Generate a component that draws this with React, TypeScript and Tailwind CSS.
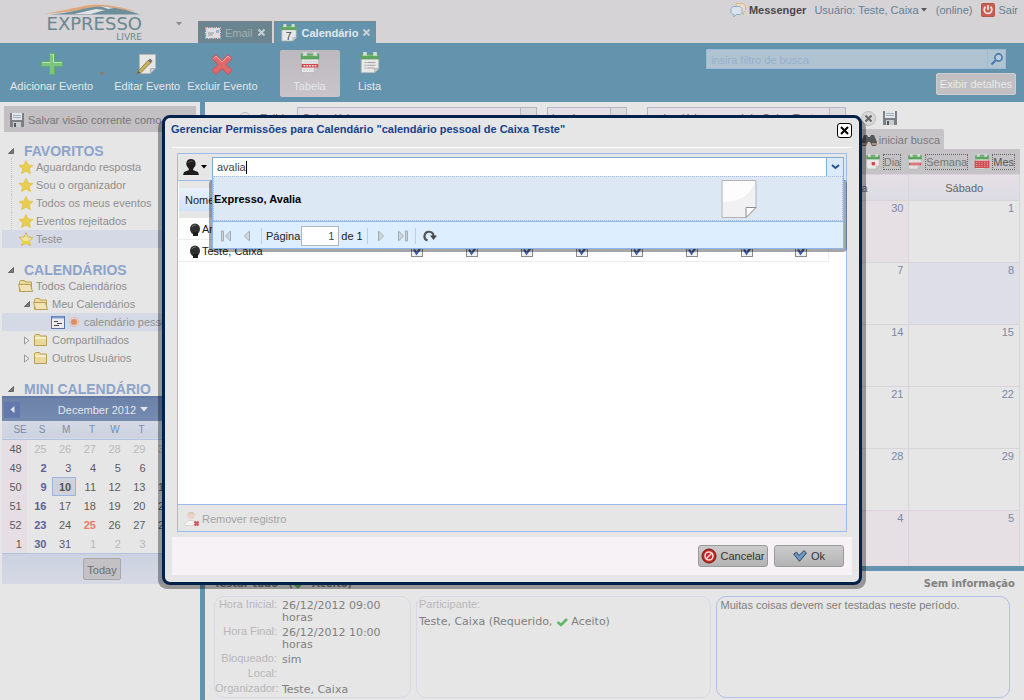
import React from "react";

type KidsProps = { children?: React.ReactNode };

/* ---------- icons ---------- */

const PlusIcon = () => (
  <svg width="24" height="24" viewBox="0 0 24 24">
    <path d="M9.500 1.500h5v8h8v5h-8v8h-5v-8h-8v-5h8z" fill="#7cc47f" stroke="#5fae68" />
    <path d="M10.500 2.500h3v8h8M2.500 10.500h8" fill="none" stroke="#b4e2b0" />
  </svg>
);

const EditIcon = () => (
  <svg width="24" height="24" viewBox="0 0 24 24">
    <path d="M4.500 2.500h16v14l-5 5h-11z" fill="#e6e6e4" stroke="#b3b9bb" />
    <path d="M15.500 21.500v-5h5z" fill="#cfcfcd" stroke="#aab" />
    <path d="M3 19.500L13.500 8l2.500 2.500L5.500 21 2.500 21.500z" fill="#cdb45c" stroke="#8d7d4c" />
    <path d="M2.500 21.500l1-2.500 1.800 1.800z" fill="#555" />
    <path d="M13 8.500l2-2 2.500 2.500-2 2z" fill="#77746e" />
  </svg>
);

const DeleteIcon = () => (
  <svg width="24" height="24" viewBox="0 0 24 24">
    <path d="M6 2.500l6 6 6-6 4 4-6 6 6 6-4 4-6-6-6 6-4-4 6-6-6-6z" fill="#e0696b" stroke="#c95355" />
    <path d="M3.500 6.500l2.500-2.500 6 6 6-6 2.500 2.500" fill="none" stroke="#eeb3b1" />
  </svg>
);

const CalIcon = ({ size = 24, kind }: { size?: number; kind: string }) => (
  <svg width={size} height={size} viewBox="0 0 24 24" className="shrink-0">
    <path d="M2.500 3.500h19v14.500l-4.500 4.500h-14.500z" fill="#e8e8e8" stroke="#b3b6b5" />
    <path d="M17 22.500V18h4.500z" fill="#d2d2d2" stroke="#b3b6b5" />
    <path d="M2.500 2.500h19v5h-19z" fill="#5fa862" stroke="#4f9a55" />
    <path d="M3 3.500h18" stroke="#8cc58c" />
    <path d="M6.500 0v4M17.500 0v4" stroke="#d5dcd6" strokeWidth="4" />
    {kind === "list" && <path d="M6 11.500h2M9 11.500h9M6 14.500h2M9 14.500h9M6 17.500h2M9 17.500h8" stroke="#9b9b9b" />}
    {kind === "week" && <path d="M5 10.500h15M5 19.500h11" stroke="#bbb" strokeDasharray="1 1" />}
    {kind === "week" && <rect x="3" y="13" width="18" height="4" fill="#d04a50" />}
    {kind === "week" && <path d="M5 15h15" stroke="#f0d6d6" strokeWidth="1.500" strokeDasharray="2 1" />}
    {kind === "month" && <rect x="1" y="10" width="22" height="11" fill="#d04a50" />}
    {kind === "month" && <path d="M3 12.500h19M3 15.500h19M3 18.500h19" stroke="#efcfd0" strokeDasharray="2 2" />}
    {kind === "day" && <rect x="10" y="12" width="5" height="5" fill="#d04a50" />}
    {kind === "seven" && (
      <text x="7.500" y="21" fontSize="14" fontWeight="400" fontFamily="Liberation Sans, sans-serif" fill="#3f4448">
        7
      </text>
    )}
  </svg>
);

const MailIcon = () => (
  <svg width="16" height="12" viewBox="0 0 16 12" className="shrink-0">
    <rect x="1" y="1" width="14" height="10" fill="#dfdfe2" stroke="#d5d5da" strokeWidth="2" />
    <rect x=".5" y=".5" width="15" height="11" fill="none" stroke="#c77" strokeDasharray="1.500 3" />
    <rect x=".5" y=".5" width="15" height="11" fill="none" stroke="#68a" strokeDasharray="1.500 3" strokeDashoffset="2" />
    <path d="M3 6h6M3 8h5" stroke="#999" />
    <rect x="11" y="3" width="3" height="3" fill="#9db2d2" />
  </svg>
);

const FloppyIcon = () => (
  <svg width="14" height="14" viewBox="0 0 14 14" className="shrink-0">
    <path d="M0 0h14v14H0z" fill="#7c7f83" />
    <rect x="2" y="0" width="10" height="7" fill="#e3e6e8" />
    <path d="M3 2.500h8M3 4.500h8" stroke="#9db0c0" />
    <rect x="3" y="9" width="8" height="5" fill="#c9cbcd" />
    <rect x="4" y="10" width="2" height="4" fill="#55585c" />
  </svg>
);

const StarIcon = ({ open = false }: { open?: boolean }) => (
  <svg width="16" height="16" viewBox="0 0 16 16" className="shrink-0">
    <path
      d="M8 1.500l2 4.500 5 .500-3.800 3.200 1.200 4.800L8 12l-4.400 2.500 1.200-4.800L1 6.500 6 6z"
      fill={open ? "#efe2a0" : "#e8cd52"}
      stroke={open ? "#d5b85c" : "#e3c64f"}
    />
    {open && <path d="M4 10h8l.500 4L8 12l-4 2z" fill="#ead23f" />}
  </svg>
);

const FolderIcon = ({ open = false }: { open?: boolean }) => (
  <svg width="16" height="14" viewBox="0 0 16 14" className="shrink-0">
    <path d="M1.500 12.500v-10l1-1h4l1 1.500h6v9.500z" fill="#ead99a" stroke="#b99f55" />
    {open ? (
      <path d="M.500 5.500h12l2 7h-12z" fill="#f0e4b4" stroke="#b99f55" />
    ) : (
      <path d="M2 5h11" stroke="#f6efcb" strokeWidth="2" />
    )}
  </svg>
);

const EventListIcon = () => (
  <svg width="14" height="13" viewBox="0 0 14 13" className="shrink-0">
    <rect x=".5" y=".5" width="13" height="12" fill="#ececf0" stroke="#5c73a5" />
    <path d="M1 1.500h12" stroke="#7f9fd5" strokeWidth="2" />
    <path d="M3 5.500h4M6 7.500h5M3 9.500h5" stroke="#444" />
  </svg>
);

const Collapse = () => (
  <svg width="6" height="6" viewBox="0 0 6 6" className="shrink-0">
    <path d="M5.500.500v5h-5z" fill="#777" stroke="#666" />
  </svg>
);

const Expand = () => (
  <svg width="6" height="9" viewBox="0 0 6 9" className="shrink-0">
    <path d="M.500 1l4.500 3.500L.500 8z" fill="#eee" stroke="#999" />
  </svg>
);

const Caret = ({ className = "" }: { className?: string }) => (
  <svg width="6" height="4" viewBox="0 0 6 4" className={"shrink-0 fill-current " + className}>
    <path d="M0 0h6L3 3.500z" />
  </svg>
);

const Cross = () => (
  <svg width="7" height="7" viewBox="0 0 7 7" className="shrink-0">
    <path d="M.500.500l6 6M6.500.500l-6 6" stroke="#c9d0d3" strokeWidth="2" />
  </svg>
);

const Chevron = () => (
  <svg width="9" height="6" viewBox="0 0 9 6">
    <path d="M1 1l3.500 3L8 1" fill="none" stroke="#2b4f94" strokeWidth="2" />
  </svg>
);

const GreenCheck = () => (
  <svg width="12" height="10" viewBox="0 0 12 10" className="inline-block">
    <path d="M1.500 5l3.500 3 6-6" fill="none" stroke="#5fb865" strokeWidth="2.500" />
  </svg>
);

const HeadIcon = () => (
  <svg width="12" height="14" viewBox="0 0 12 14" className="shrink-0">
    <ellipse cx="6" cy="7" rx="5" ry="5.500" fill="#2f2f2f" />
    <path d="M4 10h5v4H4z" fill="#1d1d1d" />
    <path d="M3 5c1-2 3-2 4-2" stroke="#777" fill="none" />
  </svg>
);

const UserIcon = () => (
  <svg width="16" height="16" viewBox="0 0 16 16">
    <path d="M8 0C4 0 3 3 3.500 6.500 4 8 6 9 6 11L1 13 0 16h16l-1-3-5-2C10 9 12 8 12.500 6.500 13 3 12 0 8 0z" fill="#1c1c1c" />
    <path d="M5.500 4c1-2 3-2 4-1.500" stroke="#666" fill="none" />
  </svg>
);

const RemoveUserIcon = () => (
  <svg width="16" height="16" viewBox="0 0 16 16">
    <path d="M1 14.500c0-4 3-5 6-5s6 1 6 5z" fill="#f6f4f4" stroke="#dcd7d8" />
    <circle cx="7" cy="4.500" r="3.500" fill="#ead2c4" />
    <path d="M3.500 4c0-4.500 7-4.500 7 0-2-2-5-2-7 0z" fill="#d5c6b4" />
    <path d="M10.500 10.500l4 4M14.500 10.500l-4 4" stroke="#cf5a5a" strokeWidth="2.400" />
  </svg>
);

const NoteIcon = () => (
  <svg width="36" height="38" viewBox="0 0 36 38">
    <path d="M1 .500h34v27l-10 10H1z" fill="#f1f0f2" stroke="#b5b3b8" />
    <path d="M2 1h32c-3 13-15 21-32 21z" fill="#fdfdfd" />
    <path d="M25 37.500v-10h10z" fill="#fff" stroke="#8d8d90" />
  </svg>
);

const PagerIcon = ({ d }: { d: string }) => (
  <svg width="12" height="12" viewBox="0 0 12 12">
    <path d={d} fill="#cfd5dc" stroke="#a3abb4" />
  </svg>
);

const RefreshIcon = () => (
  <svg width="14" height="12" viewBox="0 0 14 12">
    <path d="M4.500 10.500A4.500 4.500 0 1 1 10.500 6" fill="none" stroke="#555" strokeWidth="2.200" />
    <path d="M7 5.500h7L10.500 10z" fill="#444" />
  </svg>
);

const BanIcon = () => (
  <svg width="16" height="16" viewBox="0 0 16 16">
    <circle cx="8" cy="8" r="7" fill="#c5261f" stroke="#7d1713" />
    <circle cx="8" cy="8" r="4" fill="none" stroke="#f0dcda" strokeWidth="1.600" />
    <path d="M5 11l6-6" stroke="#f0dcda" strokeWidth="1.600" />
  </svg>
);

const OkIcon = () => (
  <svg width="14" height="12" viewBox="0 0 14 12">
    <path d="M.700 4l3-1.800 2.300 3.300L11 .700 13.500 3 6.500 11.300z" fill="#6f98c4" stroke="#2c4664" />
  </svg>
);

const ChatIcon = () => (
  <svg width="16" height="16" viewBox="0 0 16 16">
    <path d="M6 1.500h7l2.500 2v5l-2 2v2l-2-2H7z" fill="#e8dccb" stroke="#d9b887" />
    <path d="M3 4.500h7l2 2v4l-2 2H6.500L4 15v-2.500H3l-2-2v-4z" fill="#dbe3ec" stroke="#8cabc8" />
  </svg>
);

const PowerIcon = () => (
  <svg width="14" height="14" viewBox="0 0 14 14">
    <rect x=".5" y=".5" width="13" height="13" rx="1" fill="#cb5e51" stroke="#b5564b" />
    <path d="M4.500 3.800a3.800 3.800 0 1 0 5 0M7 2v5" fill="none" stroke="#f0dedb" strokeWidth="1.800" />
  </svg>
);

const SearchIcon = () => (
  <svg width="14" height="14" viewBox="0 0 14 14">
    <circle cx="8.500" cy="5.500" r="3.600" fill="#b9cde0" stroke="#4679a8" strokeWidth="1.600" />
    <path d="M5.500 8.500L1.500 12.500" stroke="#4679a8" strokeWidth="2.200" />
  </svg>
);

const BinocularsIcon = () => (
  <svg width="16" height="14" viewBox="0 0 16 14">
    <path d="M3 2h3l1 2h2l1-2h3l3 7-1 4h-4L9 9H7l-2 4H1L0 9z" fill="#55575b" />
    <path d="M1 10h4v2H1zM11 10h4v2h-4z" fill="#b98e6d" />
  </svg>
);

const Logo = () => (
  <div className="flex w-[122px] flex-col items-end text-[#6a8791]">
    <svg width="98" height="11" viewBox="0 0 98 11">
      <path d="M0 9.500C22 7 38 1 52 .500c16 0 30 4 40 7-12-2-24-3.500-36-3C40 5 22 9 0 9.500z" fill="#dfa679" />
      <path d="M6 10.500C28 9 42 3 56 2.500c14 .500 30 4 40 8z" fill="#6d8f9c" />
      <path d="M30 10l22-5 9 1-14 4zM56 2l14 2-6 1z" fill="#dfe4e7" />
    </svg>
    <span className="font-['DejaVu_Sans',sans-serif] text-[18px] leading-[18px]">EXPRESSO</span>
    <span className="font-['DejaVu_Sans',sans-serif] text-[9px] leading-[9px]">LIVRE</span>
  </div>
);

/* ---------- header and tool bar ---------- */

const Header = () => (
  <header className="flex h-[43px] justify-between bg-[#d5d3d6]">
    <div className="flex items-end">
      <a href="#inicio" aria-label="Expresso Livre" className="mb-px ml-[20px]">
        <Logo />
      </a>
      <Caret className="mr-4 mb-[17px] ml-[34px] text-[#8b8b8b]" />
      <nav className="flex items-end gap-[2px]">
        <a href="#email" className="flex h-[22px] items-center gap-1 border border-b-0 border-[#7c8284] bg-[#6b8590] px-1.5 text-[#a3b0b4]">
          <MailIcon />
          <span className="pr-px">Email</span>
          <Cross />
        </a>
        <a href="#calendario" className="flex h-[22px] items-center gap-1 border border-b-0 border-[#7c8a8c] bg-[#6393ad] px-[5px] font-bold text-[#e4e9ec]">
          <CalIcon size={18} kind="seven" />
          <span className="pr-px">Calendário</span>
          <Cross />
        </a>
      </nav>
    </div>
    <div className="flex h-5 items-center pr-1.5 text-[#5f8296]">
      <ChatIcon />
      <a href="#messenger" className="mr-2 ml-[3px] font-bold text-[#484848]">
        Messenger
      </a>
      <a href="#usuario" className="flex items-center gap-0.5">
        Usuário: Teste, Caixa
        <Caret className="text-[#555]" />
      </a>
      <span className="mx-[9px]">(online)</span>
      <PowerIcon />
      <a href="#sair" className="ml-[3px]">
        Sair
      </a>
    </div>
  </header>
);

const ToolButton = ({ label, children, className = "" }: KidsProps & { label: string; className?: string }) => (
  <button className={"flex h-[47px] flex-col items-center rounded-[2px] pt-0.5 leading-[16px] " + className}>
    {children}
    <span className="pt-0.5">{label}</span>
  </button>
);

const ToolBar = () => (
  <div className="flex h-[59px] justify-between bg-[#6393ad] text-[#e4e8ea]">
    <div className="flex pt-[7px] pl-[10px]">
      <ToolButton label="Adicionar Evento">
        <PlusIcon />
      </ToolButton>
      <Caret className="mt-[22px] mr-[9px] ml-1.5 text-[#877f70]" />
      <ToolButton label="Editar Evento">
        <EditIcon />
      </ToolButton>
      <ToolButton label="Excluir Evento" className="ml-[7px]">
        <DeleteIcon />
      </ToolButton>
      <ToolButton label="Tabela" className="ml-[22px] w-[60px] bg-linear-to-b from-[#bcb9be] to-[#c9c4ca]">
        <CalIcon size={22} kind="week" />
        <span className="h-0.5" />
      </ToolButton>
      <ToolButton label="Lista" className="w-[60px]">
        <CalIcon size={22} kind="list" />
        <span className="h-0.5" />
      </ToolButton>
    </div>
    <div className="flex flex-col items-end gap-1 pt-1.5 pr-2">
      <div className="mr-2.5 flex h-5 w-[300px] border border-[#9bb9d8] bg-[#b0c3d1]">
        <input
          aria-label="Filtro de busca"
          placeholder="insira filtro de busca"
          className="min-w-0 grow bg-transparent px-1 pt-0.5 outline-none placeholder:text-[#96b0cc]"
        />
        <button aria-label="Buscar" className="flex w-[18px] items-center justify-center border-l border-[#9bb9d8]">
          <SearchIcon />
        </button>
      </div>
      <button className="h-[22px] rounded-[2px] border border-[#cfccd0] bg-[#c1bfc2] px-[3px] text-[#e9e9ea]">Exibir detalhes</button>
    </div>
  </div>
);

/* ---------- side bar ---------- */

const SectionTitle = ({ children }: KidsProps) => (
  <h2 className="flex h-4 items-center gap-2.5 pt-0.5 pl-[8px] text-[14px] leading-[16px] font-bold text-[#8ca3cb]">
    <Collapse />
    {children}
  </h2>
);

const TreeRow = ({ children, className = "" }: KidsProps & { className?: string }) => (
  <li className={"flex h-[18px] items-center gap-0.5 whitespace-nowrap " + className}>{children}</li>
);

const TreeLine = () => <span className="-mr-0.5 h-full w-[7px] border-l border-dotted border-[#c4c4c4]" />;

const favorites = ["Aguardando resposta", "Sou o organizador", "Todos os meus eventos", "Eventos rejeitados"];

const weeks: [number, number[]][] = [
  [48, [25, 26, 27, 28, 29, 30, 1]],
  [49, [2, 3, 4, 5, 6, 7, 8]],
  [50, [9, 10, 11, 12, 13, 14, 15]],
  [51, [16, 17, 18, 19, 20, 21, 22]],
  [52, [23, 24, 25, 26, 27, 28, 29]],
  [1, [30, 31, 1, 2, 3, 4, 5]],
];

const isOtherMonth = (w: number, d: number) => (w === 48 && d > 20) || (w === 1 && d < 20);

const dayClass = (w: number, d: number, i: number) => {
  if (isOtherMonth(w, d)) return "text-[#b9b9b9]";
  if (w === 52 && d === 25) return "font-bold text-[#ee7b66]";
  if (w === 50 && d === 10) return "bg-[#cfd2da] font-bold text-[#555] shadow-[inset_0_0_0_1px_#9fb4dc]";
  if (i === 0) return "font-bold text-[#60609b]";
  return "text-[#5c5c5c]";
};

const MiniCalendar = () => (
  <div className="ml-0.5">
    <div className="flex h-[25px] items-center border-t-2 border-[#6278a5] bg-linear-to-b from-[#6c82a9] to-[#768bb0] text-[#e4e6ea]">
      <button aria-label="Mês anterior" className="ml-0.5 flex h-4 w-4 items-center justify-center bg-[#6379ab]">
        <svg width="5" height="7" viewBox="0 0 5 7" className="fill-current">
          <path d="M4.500 0v7L.500 3.500z" />
        </svg>
      </button>
      <button className="flex grow items-center justify-center gap-1 pr-[14px]">
        December 2012
        <svg width="8" height="5" viewBox="0 0 8 5" className="fill-current">
          <path d="M0 0h8L4 4.500z" />
        </svg>
      </button>
    </div>
    <table className="w-full table-fixed border-collapse text-right">
      <thead>
        <tr className="h-[18px] border-b border-[#b3c2de] bg-linear-to-b from-[#d5d9e4] to-[#ccd2e1] text-[10px] text-[#7a8cab]">
          {["SE", "S", "M", "T", "W", "T", "F", "S"].map((d, i) => (
            <th key={i} className={i === 0 ? "font-normal" : "pr-1.5 font-normal"}>
              {d}
            </th>
          ))}
        </tr>
      </thead>
      <tbody>
        {weeks.map(([w, days]) => (
          <tr key={w} className="h-[19px]">
            <th className="bg-[#e5dfe5] pr-[5px] font-normal text-[#5c5c5c]">{w}</th>
            {days.map((d, i) => (
              <td key={i} className={"pr-[5px] " + dayClass(w, d, i)}>
                {d}
              </td>
            ))}
          </tr>
        ))}
      </tbody>
    </table>
    <div className="flex h-[31px] items-center justify-center border-t border-[#b3c2de] bg-linear-to-b from-[#ccd2e1] to-[#d6d9e4] pl-0.5">
      <button className="h-[22px] rounded-[2px] border border-[#a9a7aa] bg-[#c3c1c4] px-[3px] pt-0.5 text-[#6f6f6f]">Today</button>
    </div>
  </div>
);

const Sidebar = () => (
  <aside className="w-[200px] shrink-0 pt-1 text-[#8f8f8f]">
    <button className="mb-2.5 ml-1 flex h-[26px] w-[192px] items-center gap-1 bg-[#c2c0c2] pt-0.5 pl-1.5 whitespace-nowrap text-[#777]">
      <FloppyIcon />
      Salvar visão corrente como
    </button>
    <SectionTitle>FAVORITOS</SectionTitle>
    <ul className="mb-[13px]">
      {favorites.map((f) => (
        <TreeRow key={f} className="pl-[11px]">
          <TreeLine />
          <StarIcon />
          {f}
        </TreeRow>
      ))}
      <TreeRow className="ml-0.5 bg-[#d5d9e5] pl-4">
        <StarIcon open />
        Teste
      </TreeRow>
    </ul>
    <SectionTitle>CALENDÁRIOS</SectionTitle>
    <ul className="mb-[13px]">
      <TreeRow className="pl-[18px]">
        <FolderIcon open />
        Todos Calendários
      </TreeRow>
      <TreeRow className="gap-[3px] pl-6">
        <Collapse />
        <FolderIcon open />
        Meu Calendários
      </TreeRow>
      <TreeRow className="ml-0.5 bg-[#d5d9e5] pl-[49px]">
        <EventListIcon />
        <span className="mx-0.5 flex h-2.5 w-2.5 shrink-0 items-center justify-center rounded-full border border-[#e9b89e]">
          <span className="h-1.5 w-1.5 rounded-full bg-[#e88a5c]" />
        </span>
        <span className="overflow-hidden pl-px">calendário pessoal</span>
      </TreeRow>
      {["Compartilhados", "Outros Usuários"].map((f) => (
        <TreeRow key={f} className="gap-[3px] pl-6">
          <Expand />
          <FolderIcon />
          {f}
        </TreeRow>
      ))}
    </ul>
    <SectionTitle>MINI CALENDÁRIO</SectionTitle>
    <MiniCalendar />
  </aside>
);

/* ---------- calendar pane ---------- */

const Combo = ({ label, value, className }: { label: string; value: string; className: string }) => (
  <div className={"flex h-[22px] border border-[#b6b6c4] bg-[#e3dfe4] text-[#6a6a6a] " + className}>
    <select aria-label={label} className="min-w-0 grow appearance-none px-1 outline-none">
      <option>{value}</option>
    </select>
    <span className="flex w-[16px] items-center justify-center border-l border-[#b6b6c4] bg-[#dcdcdf]">
      <Caret />
    </span>
  </div>
);

const viewButtons = [
  ["Dia", "day"],
  ["Semana", "week"],
  ["Mes", "month"],
];

const monthDays = ["Domingo", "Segunda", "Terça", "Quarta", "Quinta", "Sexta", "Sábado"];

const MonthPane = () => (
  <section className="flex h-[464px] flex-col pt-[5px]">
    <div className="flex h-[22px] items-center text-[#6a6a6a]">
      <span className="ml-[34px] h-3 w-3 rounded-full border border-[#b9b9bf] bg-[#e3dfe4]" />
      <span className="w-[46px] pl-[9px]">Exibir</span>
      <Combo label="Campo" value="Calendário" className="w-[240px]" />
      <Combo label="Operador" value="igual a" className="ml-2.5 w-20" />
      <Combo label="Valor" value="calendário pessoal de Caixa Teste" className="ml-5 w-[199px]" />
      <button aria-label="Remover filtro" className="ml-[15px] flex h-[15px] w-[15px] items-center justify-center rounded-full border border-[#bcbcbc] bg-[#d8d8d8]">
        <svg width="7" height="7" viewBox="0 0 7 7">
          <path d="M.500.500l6 6M6.500.500l-6 6" stroke="#666" strokeWidth="2" />
        </svg>
      </button>
      <button aria-label="Salvar filtro" className="ml-[7px]">
        <FloppyIcon />
      </button>
    </div>
    <div className="flex h-5 items-center justify-end pr-20">
      <button className="flex h-[20px] items-center gap-0.5 rounded-t-[2px] bg-[#c6c4c7] pt-px pr-1 pl-0.5 text-[#7a7a7a]">
        <BinocularsIcon />
        iniciar busca
      </button>
    </div>
    <div className="mr-1 flex h-[25px] shrink-0 items-center justify-end gap-1.5 bg-[#c5c3c5] pr-[5px] text-[#777]">
      {viewButtons.map(([label, kind]) => (
        <button key={label} className="flex items-center gap-0.5 last:text-[#555]">
          <CalIcon size={16} kind={kind} />
          <span className="border border-dotted border-[#666] leading-[14px]">{label}</span>
        </button>
      ))}
    </div>
    <table className="mr-1 grow table-fixed border-collapse">
      <thead>
        <tr className="h-[26px] bg-linear-to-b from-[#e4e0e5] to-[#dcdce4] text-[#666]">
          <th className="w-10 border border-[#d9d4da]" />
          {monthDays.map((d) => (
            <th key={d} className="w-[110px] border border-[#d9d4da] font-normal">
              {d}
            </th>
          ))}
        </tr>
      </thead>
      <tbody>
        {weeks.map(([w, days]) => (
          <tr key={w} className="h-[62px] last:h-[57px]">
            <td className="border border-[#d9d4da]" />
            {days.map((d, i) => (
              <td
                key={i}
                className={
                  "border border-[#d9d4da] px-[5px] text-right align-top text-[#7a88a8] " +
                  (isOtherMonth(w, d) ? "bg-[#e6e0e5]" : w === 49 && d === 8 ? "bg-[#dddee8]" : "")
                }
              >
                {d}
              </td>
            ))}
          </tr>
        ))}
      </tbody>
    </table>
  </section>
);

const details = [
  ["Hora Inicial:", "26/12/2012 09:00 horas"],
  ["Hora Final:", "26/12/2012 10:00 horas"],
  ["Bloqueado:", "sim"],
  ["Local:", ""],
  ["Organizador:", "Teste, Caixa"],
];

const DetailsPane = () => (
  <section className="flex grow flex-col border-t-[5px] border-[#6393ad] px-[9px] pb-[5px] font-['DejaVu_Sans',sans-serif] text-[#808080]">
    <div className="flex h-[25px] items-center justify-between text-[10px] font-bold">
      <span>
        Testar tudo &nbsp; (<GreenCheck /> &nbsp;Aceito)
      </span>
      <span>Sem informação</span>
    </div>
    <div className="grid grow grid-cols-[197px_1fr_1fr] gap-[5px] pr-[5px]">
      <dl className="grid grid-cols-[62px_1fr] content-start gap-x-[5px] rounded-[10px] border border-[#d8d8e6] pt-px leading-[12px]">
        {details.map(([k, v]) => (
          <React.Fragment key={k}>
            <dt className="pb-[3px] text-right font-['Liberation_Sans',sans-serif] whitespace-nowrap text-[#b9b5b9]">{k}</dt>
            <dd className="pt-0.5 pb-px">{v}</dd>
          </React.Fragment>
        ))}
      </dl>
      <div className="rounded-[10px] border border-[#d8d8e6] px-0.5">
        <p className="font-['Liberation_Sans',sans-serif] leading-[14px] text-[#b9b5b9]">Participante:</p>
        <p className="pt-1 leading-[14px]">
          Teste, Caixa (Requerido, <GreenCheck /> Aceito)
        </p>
      </div>
      <textarea
        aria-label="Descrição"
        className="resize-none rounded-[10px] border border-[#b3c1e6] bg-transparent px-1 pt-0.5 font-['Liberation_Sans',sans-serif] leading-[13px] outline-none"
        defaultValue="Muitas coisas devem ser testadas neste período."
      />
    </div>
  </section>
);

/* ---------- permissions dialog ---------- */

const Suggestions = () => (
  <div className="absolute -inset-x-px top-full z-10 h-[73px]">
    <div className="absolute -inset-x-[3px] top-1 -bottom-[3px] rounded-[4px] bg-black/35" />
    <div className="relative flex h-full flex-col border border-t-0 border-[#8fb5ee] bg-[#ddeeff]">
      <div className="flex h-[45px] items-center justify-between border border-dotted border-[#a3bae9] bg-[#dde8f5] pr-[85px] font-bold text-black">
        Expresso, Avalia
        <NoteIcon />
      </div>
      <div className="flex grow items-center border-t border-[#8fb5ee] pt-px pl-[7px] text-[#222]">
        <button aria-label="Primeira página">
          <PagerIcon d="M1.500 1v10h2V1zM10.500 1v10L5.500 6z" />
        </button>
        <button aria-label="Página anterior" className="ml-2.5">
          <PagerIcon d="M7.500 1v10L2.500 6z" />
        </button>
        <span className="mr-1 ml-[7px] h-4 w-px bg-[#c3cdd8]" />
        <label className="flex items-center gap-px">
          Página
          <input className="h-5 w-[38px] border border-[#b1b5bc] bg-white px-1 text-right text-[#444] outline-none" defaultValue="1" />
        </label>
        <span className="pl-0.5">de 1</span>
        <span className="mr-[7px] ml-1 h-4 w-px bg-[#c3cdd8]" />
        <button aria-label="Próxima página">
          <PagerIcon d="M3.500 1v10l5-5z" />
        </button>
        <button aria-label="Última página" className="ml-2.5">
          <PagerIcon d="M1.500 1v10l5-5zM8.500 1v10h2V1z" />
        </button>
        <span className="mr-[7px] ml-1.5 h-4 w-px bg-[#c3cdd8]" />
        <button aria-label="Atualizar">
          <RefreshIcon />
        </button>
      </div>
    </div>
  </div>
);

const Tick = ({ label }: { label: string }) => (
  <label className="relative mx-auto block h-3 w-3">
    <input type="checkbox" defaultChecked aria-label={label} className="block h-3 w-3 appearance-none border border-[#8b8b8b] bg-[#f2f2f2]" />
    <svg width="12" height="12" viewBox="0 0 12 12" className="pointer-events-none absolute inset-0">
      <path d="M3 4.500l2.500 4L9.500 3" fill="none" stroke="#3f5fa8" strokeWidth="2.200" />
    </svg>
  </label>
);

const columns = [1, 2, 3, 4, 5, 6, 7, 8];

const PermissionGrid = () => (
  <div className="grow bg-white pr-[17px] pl-px">
    <table className="w-full table-fixed border-separate border-spacing-0 text-left text-[#222]">
      <thead>
        <tr className="h-[37px]">
          <th className="border-y-[7px] border-[#e6e6e6] bg-linear-to-b from-[#eaf1fb] to-[#cfe2fb] pl-1.5 font-normal">Nome</th>
          {columns.map((c) => (
            <th key={c} className="w-[55px] border-y-[7px] border-[#e6e6e6] bg-[#dbe8fa]" />
          ))}
        </tr>
      </thead>
      <tbody>
        {["Ar", "Teste, Caixa"].map((name) => (
          <tr key={name} className="h-[22px]">
            <td className="border-b border-[#ededed]">
              <span className="flex items-center pl-[10px]">
                <HeadIcon />
                <span className="pl-px">{name}</span>
              </span>
            </td>
            {columns.map((c) => (
              <td key={c} className="border-b border-[#ededed] last:border-r">
                <Tick label={name + " " + c} />
              </td>
            ))}
          </tr>
        ))}
      </tbody>
    </table>
  </div>
);

const PermissionsDialog = () => (
  <div className="fixed inset-0 z-20 flex items-center justify-center">
    <div className="relative w-[700px]">
      <div className="absolute -inset-x-1 top-1 -bottom-1 rounded-[9px] bg-black/35" />
      <div role="dialog" aria-labelledby="dialog-title" className="relative flex min-h-[470px] flex-col rounded-[8px] border-3 border-[#00224a] bg-[#e6e6e6] px-[7px] pb-[7px]">
        <div className="mb-[5px] flex h-[30px] items-start justify-between border-b border-white">
          <h1 id="dialog-title" className="-ml-px pt-1 leading-[14px] font-bold text-[#15428b]">
            Gerenciar Permissões para Calendário "calendário pessoal de Caixa Teste"
          </h1>
          <button aria-label="Fechar" className="mt-[5px] flex h-[15px] w-[15px] items-center justify-center rounded-[3px] border border-black bg-white">
            <svg width="9" height="9" viewBox="0 0 9 9">
              <path d="M1 1l7 7M8 1L1 8" stroke="#000" strokeWidth="2" />
            </svg>
          </button>
        </div>
        <div className="mx-[5px] mb-[5px] flex grow flex-col border border-[#9ebaf0]">
          <div className="flex h-[27px] items-center border-b border-[#9ebaf0] pr-0.5 pl-[5px]">
            <button aria-label="Tipo de conta" className="flex w-[29px] items-center gap-0.5 text-black">
              <UserIcon />
              <Caret />
            </button>
            <div className="relative flex h-5 grow border border-[#7eadd9] bg-white">
              <label className="flex grow items-center pl-1">
                <input aria-label="Buscar usuário" defaultValue="avalia" className="field-sizing-content text-[#444] outline-none" />
                <span className="h-[13px] w-px bg-black" />
              </label>
              <button aria-label="Abrir lista" className="flex w-[17px] items-center justify-center border-l border-[#7eadd9] bg-[#dcebfb]">
                <Chevron />
              </button>
              <Suggestions />
            </div>
          </div>
          <PermissionGrid />
          <div className="flex h-[27px] items-center border-t border-[#9ebaf0] pt-px pl-1.5">
            <button disabled className="flex items-center gap-0.5 text-[#a3a3a3]">
              <RemoveUserIcon />
              Remover registro
            </button>
          </div>
        </div>
        <div className="flex h-[38px] items-center justify-end gap-1.5 bg-[#f6f2f6] pr-2 text-[#333]">
          <button className="flex h-[22px] w-[70px] items-center justify-center gap-[3px] rounded-[3px] border border-[#999] bg-linear-to-b from-[#cccccc] to-[#b4b4b4]">
            <BanIcon />
            Cancelar
          </button>
          <button className="flex h-[22px] w-[70px] items-center justify-center gap-1 rounded-[3px] border border-[#999] bg-linear-to-b from-[#cccccc] to-[#b4b4b4]">
            <OkIcon />
            Ok
          </button>
        </div>
      </div>
    </div>
  </div>
);

export default function App() {
  return (
    <div className="flex min-h-screen flex-col bg-[#e6e6e6] font-['Liberation_Sans',Arial,sans-serif] text-[11px] leading-[14px]">
      <Header />
      <ToolBar />
      <div className="flex grow">
        <Sidebar />
        <main className="flex min-w-0 grow flex-col border-l-[5px] border-[#6393ad]">
          <MonthPane />
          <DetailsPane />
        </main>
      </div>
      <PermissionsDialog />
    </div>
  );
}
